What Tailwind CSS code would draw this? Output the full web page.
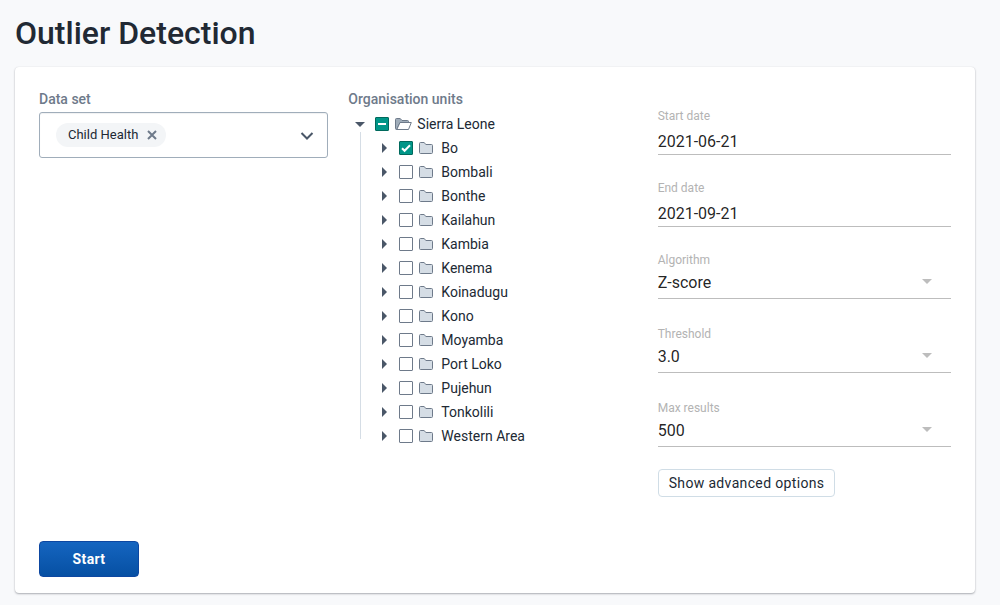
<!DOCTYPE html>
<html lang="en">
<head>
<meta charset="utf-8">
<meta name="viewport" content="width=device-width, initial-scale=1">
<title>Outlier Detection</title>
<script src="https://cdn.jsdelivr.net/npm/@tailwindcss/browser@4"></script>
</head>
<body class="bg-[#f8f9fb] font-['Roboto',sans-serif] text-sm text-[#212934]">
<svg class="hidden" aria-hidden="true">
  <symbol id="folder" viewBox="0 0 14 14"><path d="M1.500 1.500h3.700l1.600 2h5.700a1 1 0 0 1 1 1v7a1 1 0 0 1-1 1h-11a1 1 0 0 1-1-1v-9a1 1 0 0 1 1-1z" fill="#d5dde5" stroke="#6e7a8a"/></symbol>
  <symbol id="folder-open" viewBox="0 0 17 16"><path d="M.5 12.500v-9a1 1 0 0 1 1-1h3.700l1.800 2h5.500a1 1 0 0 1 1 1v1H5L1.800 13.500H1.500a1 1 0 0 1-1-1z" fill="#a0adba" stroke="#6e7a8a"/><path d="M5 6.500h11.300l-2.800 7H1.800z" fill="#fff" stroke="#6e7a8a" stroke-linejoin="round"/></symbol>
  <symbol id="right" viewBox="0 0 6 10"><path d="M1 0 6 5 1 10z" fill="#4a5768"/></symbol>
  <symbol id="drop" viewBox="0 0 10 5"><path d="M0 0h10L5 5z" fill="currentColor"/></symbol>
</svg>
<main class="px-[15px] pr-[25px] pt-3 pb-3">
  <h1 class="text-[32px] leading-[42px] font-medium">Outlier Detection</h1>
  <form class="mt-[13px] rounded-[4px] bg-white p-6 pb-4 shadow-[0_0_1px_rgba(33,41,52,0.12),0_1px_2px_rgba(33,41,52,0.35)]">
    <div class="grid grid-cols-3 gap-4">
      <section class="pr-1">
        <h2 id="ds" class="mb-1 leading-[17px] font-medium text-[#6e7a8a]">Data set</h2>
        <div role="group" aria-labelledby="ds" class="flex h-[46px] items-center justify-between rounded-[3px] border border-[#a0adba] pr-3 pl-4 shadow-[inset_0_1px_1px_rgba(102,113,123,0.1)]">
          <span class="flex h-6 items-center gap-2 rounded-full bg-[#f3f5f7] pr-2 pl-3 text-[13px]">Child Health
            <button type="button" aria-label="Remove Child Health"><svg class="size-3" viewBox="0 0 12 12" fill="none" stroke="#6e7a8a" stroke-width="2"><path d="M2 2l8 8M10 2l-8 8"/></svg></button>
          </span>
          <button type="button" aria-label="Open data sets"><svg class="size-4" viewBox="0 0 16 16" fill="none" stroke="#4a5768" stroke-width="2"><path d="M2.500 6 8 11.500 13.500 6"/></svg></button>
        </div>
      </section>

      <section>
        <h2 class="mb-1 leading-[17px] font-medium text-[#6e7a8a]">Organisation units</h2>
        <div class="flex h-6 items-center">
          <button type="button" aria-label="Collapse Sierra Leone" class="mr-[3px] flex w-6 justify-center text-[#4a5768]"><svg class="h-[5px] w-[10px]"><use href="#drop"/></svg></button>
          <label class="flex items-center">
            <span class="mr-[6px] grid size-[14px]">
              <input id="root" type="checkbox" checked class="col-start-1 row-start-1 size-[14px] appearance-none rounded-[1px] border border-[#00695c] bg-[#009688]">
              <svg class="pointer-events-none col-start-1 row-start-1 size-[14px]" viewBox="0 0 14 14"><path d="M3 7h8" stroke="#fff" stroke-width="2"/></svg>
            </span>
            <svg class="mr-[5px] h-4 w-[17px]"><use href="#folder-open"/></svg>Sierra Leone
          </label>
        </div>
        <ul id="units" class="relative pl-6 before:absolute before:-top-1 before:bottom-[9px] before:left-3 before:w-px before:bg-[#d5dde5]"></ul>
      </section>

      <section class="pt-[17px]">
        <div class="mb-[25px]">
          <label for="start" class="block text-xs leading-4 text-[#b3b3b3]">Start date</label>
          <input id="start" type="text" value="2021-06-21" class="block h-[31px] w-full border-b border-[#bdbdbd] pt-1 text-base text-black/87 outline-none">
        </div>
        <div class="mb-[25px]">
          <label for="end" class="block text-xs leading-4 text-[#b3b3b3]">End date</label>
          <input id="end" type="text" value="2021-09-21" class="block h-[31px] w-full border-b border-[#bdbdbd] pt-1 text-base text-black/87 outline-none">
        </div>
        <div class="mb-[27px]">
          <label for="algorithm" class="block text-xs leading-4 text-[#b3b3b3]">Algorithm</label>
          <div class="relative">
            <select id="algorithm" class="block h-[31px] w-full appearance-none border-b border-[#bdbdbd] text-base text-black/87 outline-none"><option>Z-score</option></select>
            <svg class="pointer-events-none absolute top-[11px] right-[19px] h-[5px] w-[10px] text-[#bdbdbd]"><use href="#drop"/></svg>
          </div>
        </div>
        <div class="mb-[27px]">
          <label for="threshold" class="block text-xs leading-4 text-[#b3b3b3]">Threshold</label>
          <div class="relative">
            <select id="threshold" class="block h-[31px] w-full appearance-none border-b border-[#bdbdbd] text-base text-black/87 outline-none"><option>3.0</option></select>
            <svg class="pointer-events-none absolute top-[11px] right-[19px] h-[5px] w-[10px] text-[#bdbdbd]"><use href="#drop"/></svg>
          </div>
        </div>
        <div class="mb-[22px]">
          <label for="max" class="block text-xs leading-4 text-[#b3b3b3]">Max results</label>
          <div class="relative">
            <select id="max" class="block h-[31px] w-full appearance-none border-b border-[#bdbdbd] text-base text-black/87 outline-none"><option>500</option></select>
            <svg class="pointer-events-none absolute top-[11px] right-[19px] h-[5px] w-[10px] text-[#bdbdbd]"><use href="#drop"/></svg>
          </div>
        </div>
        <button type="button" class="h-7 rounded-[4px] border border-[#d0dde6] px-[10px] tracking-wide">Show advanced options</button>
      </section>
    </div>
    <button type="submit" class="mt-11 h-9 w-[100px] rounded-[4px] border border-[#0d47a1] bg-linear-to-b from-[#1565c0] to-[#0650a3] font-bold tracking-wide text-white">Start</button>
  </form>
</main>
<script>
  const units = ['Bo', 'Bombali', 'Bonthe', 'Kailahun', 'Kambia', 'Kenema', 'Koinadugu', 'Kono', 'Moyamba', 'Port Loko', 'Pujehun', 'Tonkolili', 'Western Area'];
  document.getElementById('units').innerHTML = units.map(name => `
    <li class="flex h-6 items-center">
      <button type="button" aria-label="Expand ${name}" class="mr-[3px] flex w-6 justify-center"><svg class="h-[10px] w-[6px]"><use href="#right"/></svg></button>
      <label class="flex items-center">
        <span class="mr-[6px] grid size-[14px]">
          <input type="checkbox" ${name === 'Bo' ? 'checked' : ''} class="peer col-start-1 row-start-1 size-[14px] appearance-none rounded-[1px] border border-[#6e7a8a] bg-white checked:border-[#00695c] checked:bg-[#009688]">
          <svg class="pointer-events-none invisible col-start-1 row-start-1 size-[14px] peer-checked:visible" viewBox="0 0 14 14" fill="none" stroke="#fff" stroke-width="2"><path d="M3 7.200 5.600 9.800 11 4.200"/></svg>
        </span>
        <svg class="mr-2 h-[14px] w-[14px]"><use href="#folder"/></svg>${name}
      </label>
    </li>`).join('');
  document.getElementById('root').indeterminate = true;
</script>
</body>
</html>
